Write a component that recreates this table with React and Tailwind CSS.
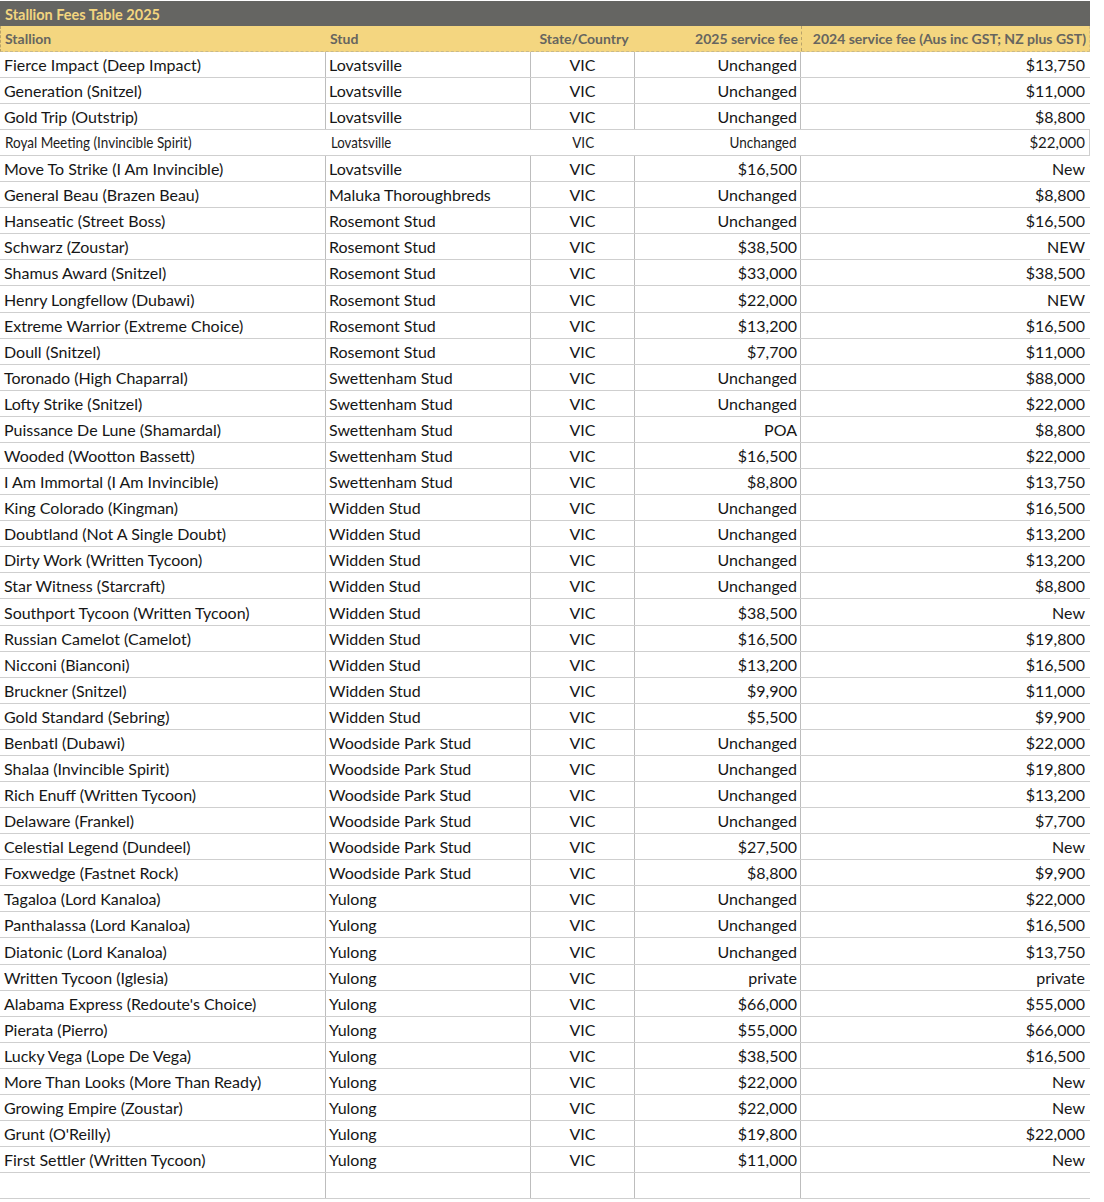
const rows = [
  ["Fierce Impact (Deep Impact)", "Lovatsville", "VIC", "Unchanged", "$13,750"],
  ["Generation (Snitzel)", "Lovatsville", "VIC", "Unchanged", "$11,000"],
  ["Gold Trip (Outstrip)", "Lovatsville", "VIC", "Unchanged", "$8,800"],
  ["Royal Meeting (Invincible Spirit)", "Lovatsville", "VIC", "Unchanged", "$22,000", "odd"],
  ["Move To Strike (I Am Invincible)", "Lovatsville", "VIC", "$16,500", "New"],
  ["General Beau (Brazen Beau)", "Maluka Thoroughbreds", "VIC", "Unchanged", "$8,800"],
  ["Hanseatic (Street Boss)", "Rosemont Stud", "VIC", "Unchanged", "$16,500"],
  ["Schwarz (Zoustar)", "Rosemont Stud", "VIC", "$38,500", "NEW"],
  ["Shamus Award (Snitzel)", "Rosemont Stud", "VIC", "$33,000", "$38,500"],
  ["Henry Longfellow (Dubawi)", "Rosemont Stud", "VIC", "$22,000", "NEW", "tall"],
  ["Extreme Warrior (Extreme Choice)", "Rosemont Stud", "VIC", "$13,200", "$16,500"],
  ["Doull (Snitzel)", "Rosemont Stud", "VIC", "$7,700", "$11,000"],
  ["Toronado (High Chaparral)", "Swettenham Stud", "VIC", "Unchanged", "$88,000"],
  ["Lofty Strike (Snitzel)", "Swettenham Stud", "VIC", "Unchanged", "$22,000"],
  ["Puissance De Lune (Shamardal)", "Swettenham Stud", "VIC", "POA", "$8,800"],
  ["Wooded (Wootton Bassett)", "Swettenham Stud", "VIC", "$16,500", "$22,000"],
  ["I Am Immortal (I Am Invincible)", "Swettenham Stud", "VIC", "$8,800", "$13,750"],
  ["King Colorado (Kingman)", "Widden Stud", "VIC", "Unchanged", "$16,500"],
  ["Doubtland (Not A Single Doubt)", "Widden Stud", "VIC", "Unchanged", "$13,200"],
  ["Dirty Work (Written Tycoon)", "Widden Stud", "VIC", "Unchanged", "$13,200"],
  ["Star Witness (Starcraft)", "Widden Stud", "VIC", "Unchanged", "$8,800"],
  ["Southport Tycoon (Written Tycoon)", "Widden Stud", "VIC", "$38,500", "New", "tall"],
  ["Russian Camelot (Camelot)", "Widden Stud", "VIC", "$16,500", "$19,800"],
  ["Nicconi (Bianconi)", "Widden Stud", "VIC", "$13,200", "$16,500"],
  ["Bruckner (Snitzel)", "Widden Stud", "VIC", "$9,900", "$11,000"],
  ["Gold Standard (Sebring)", "Widden Stud", "VIC", "$5,500", "$9,900"],
  ["Benbatl (Dubawi)", "Woodside Park Stud", "VIC", "Unchanged", "$22,000"],
  ["Shalaa (Invincible Spirit)", "Woodside Park Stud", "VIC", "Unchanged", "$19,800"],
  ["Rich Enuff (Written Tycoon)", "Woodside Park Stud", "VIC", "Unchanged", "$13,200"],
  ["Delaware (Frankel)", "Woodside Park Stud", "VIC", "Unchanged", "$7,700"],
  ["Celestial Legend (Dundeel)", "Woodside Park Stud", "VIC", "$27,500", "New"],
  ["Foxwedge (Fastnet Rock)", "Woodside Park Stud", "VIC", "$8,800", "$9,900"],
  ["Tagaloa  (Lord Kanaloa)", "Yulong", "VIC", "Unchanged", "$22,000"],
  ["Panthalassa (Lord Kanaloa)", "Yulong", "VIC", "Unchanged", "$16,500"],
  ["Diatonic (Lord Kanaloa)", "Yulong", "VIC", "Unchanged", "$13,750", "tall"],
  ["Written Tycoon (Iglesia)", "Yulong", "VIC", "private", "private"],
  ["Alabama Express (Redoute's Choice)", "Yulong", "VIC", "$66,000", "$55,000"],
  ["Pierata (Pierro)", "Yulong", "VIC", "$55,000", "$66,000"],
  ["Lucky Vega (Lope De Vega)", "Yulong", "VIC", "$38,500", "$16,500"],
  ["More Than Looks (More Than Ready)", "Yulong", "VIC", "$22,000", "New"],
  ["Growing Empire (Zoustar)", "Yulong", "VIC", "$22,000", "New"],
  ["Grunt (O'Reilly)", "Yulong", "VIC", "$19,800", "$22,000"],
  ["First Settler (Written Tycoon)", "Yulong", "VIC", "$11,000", "New"],
];

const grid = "grid grid-cols-[326px_205px_104px_166px_288px]";

function Row({ r }) {
  const kind = r[5];
  if (kind === "odd") {
    return (
      <div className={`${grid} h-[26px] border-b border-r border-[#cfcfcf] text-[15px] text-[#1c1c1c] items-center`}>
        <div className="pl-[5px] whitespace-nowrap">
          <span className="inline-block origin-left scale-x-[0.9]">{r[0]}</span>
        </div>
        <div className="pl-[5px] whitespace-nowrap">
          <span className="inline-block origin-left scale-x-[0.88]">{r[1]}</span>
        </div>
        <div className="text-center">
          <span className="inline-block origin-center scale-x-[0.9]">{r[2]}</span>
        </div>
        <div className="text-right pr-[4px]">
          <span className="inline-block origin-right scale-x-[0.9]">{r[3]}</span>
        </div>
        <div className="text-right pr-[4px]">
          <span className="inline-block origin-right">{r[4]}</span>
        </div>
      </div>
    );
  }
  const h = kind === "tall" ? "h-[27px]" : "h-[26px]";
  return (
    <div className={`${grid} ${h} border-b border-[#cfcfcf] text-[16px] text-[#161616] items-stretch`}>
      <div className="pl-[4px] pt-[1px] whitespace-nowrap flex items-center border-r border-[#bdbdbd]">{r[0]}</div>
      <div className="pl-[3px] pt-[1px] whitespace-nowrap flex items-center border-r border-[#bdbdbd]">{r[1]}</div>
      <div className="pt-[1px] flex items-center justify-center border-r border-[#bdbdbd]">{r[2]}</div>
      <div className="pt-[1px] flex items-center justify-end pr-[3px] border-r border-[#bdbdbd]">{r[3]}</div>
      <div className="pt-[1px] flex items-center justify-end pr-[4px]">{r[4]}</div>
    </div>
  );
}

export default function App() {
  return (
    <div className="bg-white w-[1104px] min-h-[1202px] pt-[1px]" style={{ fontFamily: '"Lato", "Open Sans", sans-serif' }}>
      <div className="w-[1090px]">
        <div className="h-[25px] bg-[#656562] text-[#f3d57f] font-bold text-[14.5px] flex items-center pl-[5px] pt-[2px]">
          Stallion Fees Table 2025
        </div>
        <div className={`${grid} h-[26px] bg-[#f4d680] text-[#66655f] font-bold text-[14px] border-l border-dashed border-l-[#b8a26a] border-r border-r-[#d8c080] border-b border-b-[#c9b98a]`}>
          <div className="flex items-center pl-[4px]">Stallion</div>
          <div className="flex items-center pl-[3px]">Stud</div>
          <div className="flex items-center justify-center">State/Country</div>
          <div className="flex items-center justify-end pr-[3px] border-r border-dashed border-[#b8a26a]">2025 service fee</div>
          <div className="flex items-center justify-end pr-[4px]">2024 service fee (Aus inc GST; NZ plus GST)</div>
        </div>
        {rows.map((r, i) => (
          <Row key={i} r={r} />
        ))}
        <div className={`${grid} h-[26px] border-b border-[#cfcfcf]`}>
          <div className="border-r border-[#bdbdbd]"></div>
          <div className="border-r border-[#bdbdbd]"></div>
          <div className="border-r border-[#bdbdbd]"></div>
          <div className="border-r border-[#bdbdbd]"></div>
          <div></div>
        </div>
      </div>
    </div>
  );
}
